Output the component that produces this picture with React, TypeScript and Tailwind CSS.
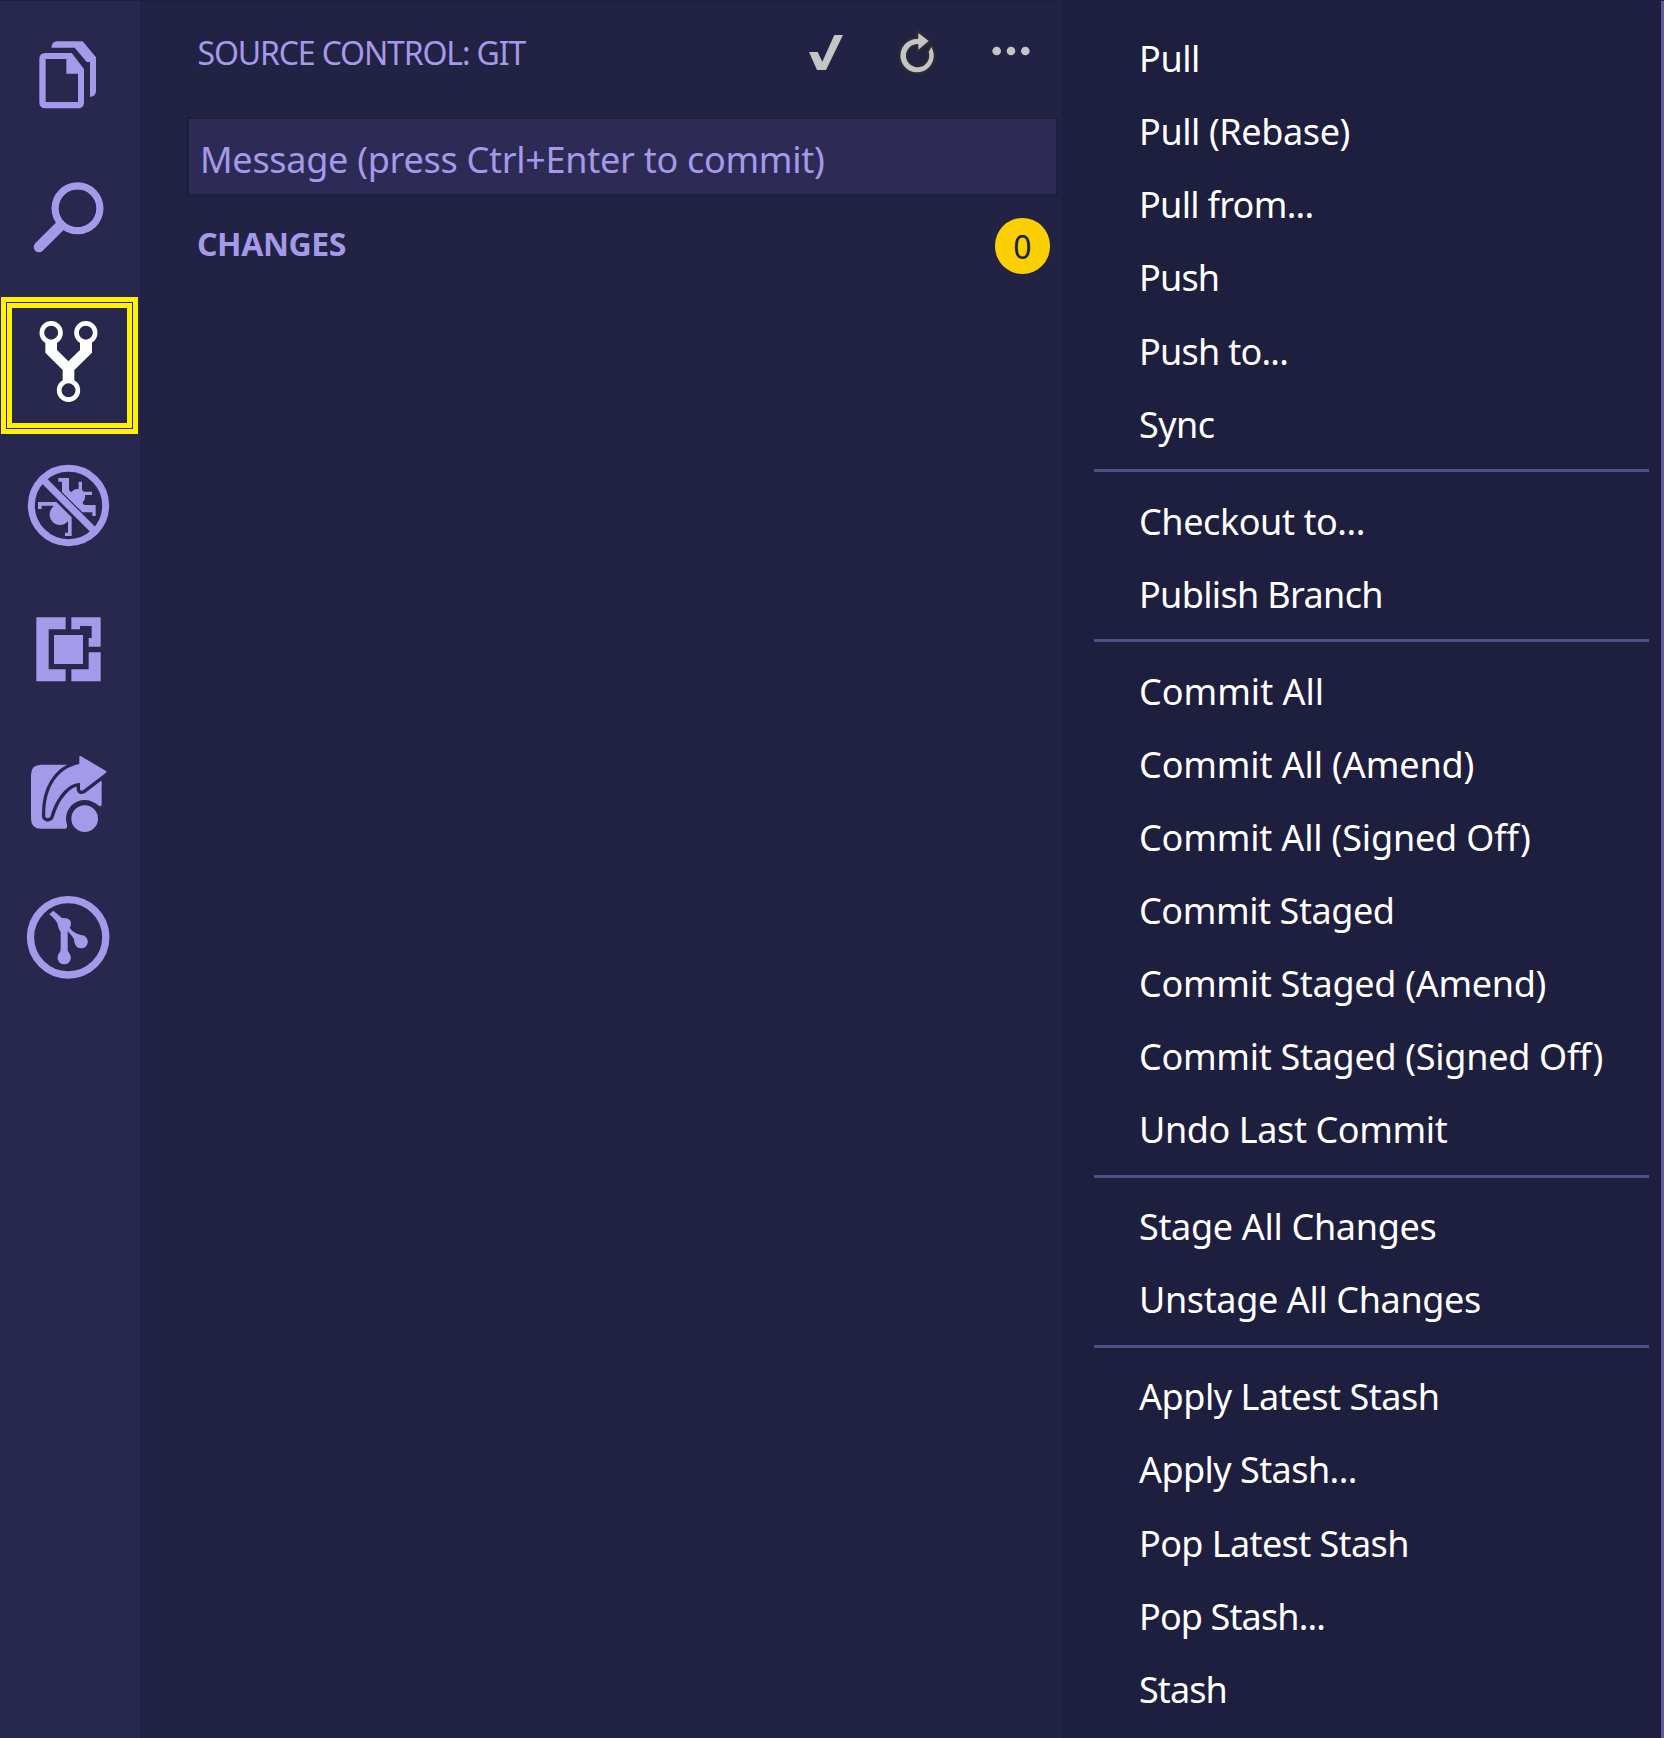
import type { ReactNode } from 'react';

const BAR = '#28284e';
const ICON = '#a599e9';

const menuGroups: [label: string, tracking: string][][] = [
  [
    ['Pull', 'tracking-[-0.4px]'],
    ['Pull (Rebase)', 'tracking-[-0.4px]'],
    ['Pull from...', 'tracking-[-0.7px]'],
    ['Push', 'tracking-[-0.8px]'],
    ['Push to...', 'tracking-[-0.75px]'],
    ['Sync', 'tracking-[-0.51px]'],
  ],
  [
    ['Checkout to...', 'tracking-[-0.42px]'],
    ['Publish Branch', 'tracking-[-0.66px]'],
  ],
  [
    ['Commit All', 'tracking-[0px]'],
    ['Commit All (Amend)', 'tracking-[-0.12px]'],
    ['Commit All (Signed Off)', 'tracking-[-0.17px]'],
    ['Commit Staged', 'tracking-[-0.42px]'],
    ['Commit Staged (Amend)', 'tracking-[-0.3px]'],
    ['Commit Staged (Signed Off)', 'tracking-[-0.29px]'],
    ['Undo Last Commit', 'tracking-[-0.4px]'],
  ],
  [
    ['Stage All Changes', 'tracking-[-0.32px]'],
    ['Unstage All Changes', 'tracking-[-0.37px]'],
  ],
  [
    ['Apply Latest Stash', 'tracking-[-0.45px]'],
    ['Apply Stash...', 'tracking-[-0.56px]'],
    ['Pop Latest Stash', 'tracking-[-0.6px]'],
    ['Pop Stash...', 'tracking-[-0.87px]'],
    ['Stash', 'tracking-[-0.9px]'],
  ],
];

function NavItem({ label, top, active = false, children }: { label: string; top: number; active?: boolean; children: ReactNode }) {
  return (
    <button aria-label={label} className="relative block h-[144px] w-full">
      {active && (
        <span className="absolute left-[1px] top-[8px] h-[137px] w-[137px] border-[5px] border-[#fff200] p-[1px]">
          <span className="block h-full w-full border-[5px] border-[#fff200]" />
        </span>
      )}
      <svg viewBox={`0 ${top} 420 432`} className="h-[144px] w-[140px]" fill={active ? '#fff' : ICON}>
        {children}
      </svg>
    </button>
  );
}

function ActivityBar() {
  return (
    <nav className="w-[140px] shrink-0 border-r-[3px] border-[#29284f] bg-[#28284e]">
      <NavItem label="Explorer" top={3}>
        <path d="M154 143q2-19 18-19H248L288 172V273q0 16-18 18V186H260L224 143Z" />
        <path fillRule="evenodd" d="M136 159H215L252 207V307q0 18-18 18H136q-18 0-18-18V177q0-18 18-18ZM137 177V306H234V221H199V177Z" />
      </NavItem>
      <NavItem label="Search" top={435}>
        <circle cx="232.500" cy="625" r="67" fill="none" stroke={ICON} strokeWidth="22" />
        <path d="M181 677L117 741" stroke={ICON} strokeWidth="32" strokeLinecap="round" />
        <circle cx="232.500" cy="625" r="56" fill={BAR} />
      </NavItem>
      <NavItem label="Source Control" top={27} active>
        <path d="M136 184H171V210L205 244L240 210V184H276V218L223 270V306H188V270L136 218Z" />
        <g fill={BAR} stroke="#fff" strokeWidth="14">
          <circle cx="153.500" cy="158" r="28" />
          <circle cx="257.500" cy="158" r="28" />
          <circle cx="205.500" cy="331" r="28" />
        </g>
      </NavItem>
      <NavItem label="Debug" top={459}>
        <circle cx="205.500" cy="676.500" r="111.500" fill="none" stroke={ICON} strokeWidth="21" />
        <path d="M128 583L299 754L284 769L113 598Z" />
        <path d="M175 594H207V630L214 637A24 24 0 0 1 236 627V605H246V630L252 635H276V645H255A24 24 0 0 1 247 668L253 675H287V708H277V697H247L186 636V605H175Z" />
        <path d="M114 666H169L215 712V768H195V758H204V724A31 31 0 1 1 156 684L161 677H125V687H114Z" />
      </NavItem>
      <NavItem label="Extensions" top={51}>
        <path d="M109 172H197V208H146V328H197V364H109ZM214 172H302V260H266V234H275V198H240V208H214ZM266 277H302V364H214V328H266ZM162 225H249V312H162Z" />
      </NavItem>
      <NavItem label="Live Share" top={483}>
        <path d="M208 614H123Q93 614 93 644V776Q93 806 123 806H195Q202 806 201 798L220 740L285 730L298 738Q305 741 305 733V664Z" />
        <path
          d="M238 592Q238 586 243 589L317 632Q322 635 317 639L250 690Q241 695 240 687V669C205 668 167 712 151 771Q143 778 136 771C133 690 168 626 238 612Z"
          stroke={BAR}
          strokeWidth="20"
          strokeLinejoin="round"
          paintOrder="stroke"
        />
        <circle cx="254" cy="776" r="56" fill={BAR} />
        <circle cx="254" cy="776" r="40" />
      </NavItem>
      <NavItem label="GitLens" top={75}>
        <circle cx="204.500" cy="292" r="113" fill="none" stroke={ICON} strokeWidth="22" />
        <path d="M148 223L160 212L186 234Q206 232 212 244Q215 256 209 263Q217 277 243 285L224 308Q226 297 203 274V330Q204 336 210 343H175Q182 336 182 328V277Q174 266 173 252Q168 240 148 223Z" />
        <circle cx="243.500" cy="305" r="20" />
        <circle cx="192.500" cy="353" r="20" />
      </NavItem>
    </nav>
  );
}

function SidePanel() {
  return (
    <section className="flex w-[922px] shrink-0 flex-col bg-[#222244] text-[#a599e9]">
      <header className="flex h-[116px] items-start">
        <h1 className="ml-[57.500px] mt-[22px] w-[611.500px] text-[32px] leading-[60px] tracking-[-1.150px]">SOURCE CONTROL: GIT</h1>
        <svg viewBox="87 86 102 140" className="mt-[27.667px] h-[46.667px] w-[34px]" fill="#c5c5c5">
          <path d="M87 155H113L127 184L163 104H189L138 209H111Z" />
        </svg>
        <svg viewBox="350 86 122 140" className="ml-[53.667px] mt-[27.667px] h-[46.667px] w-[40.667px]" fill="#c5c5c5">
          <path
            d="M414 98L445 122L414 148V131A35 35 0 1 0 445 155L453 140A50 50 0 1 1 411 116L414 115.500Z"
            stroke="#2d2d30"
            strokeWidth="13"
            paintOrder="stroke"
          />
        </svg>
        <svg viewBox="637 86 114 140" className="ml-[55px] mt-[27.667px] h-[46.667px] w-[38px]" fill="#c5c5c5">
          <circle cx="651" cy="152" r="13" />
          <circle cx="694" cy="152" r="13" />
          <circle cx="737" cy="152" r="13" />
        </svg>
      </header>
      <div className="ml-[46px] h-[80px] w-[873px] border-[3px] border-t-2 border-[#1e1e3f] bg-[#2d2b55] pl-[11px] text-[36px] leading-[81px] tracking-[-0.280px]">
        Message (press Ctrl+Enter to commit)
      </div>
      <div className="mt-[21px] flex h-[56px] items-center justify-between pl-[57px] pr-[12px]">
        <h2 className="-mt-[5px] text-[32px] font-bold leading-[56px] tracking-[-0.43px]">CHANGES</h2>
        <span className="h-[56px] w-[55px] rounded-full bg-[#fad000] text-center text-[32px] leading-[57px] text-[#222244]">0</span>
      </div>
    </section>
  );
}

function GitMenu() {
  return (
    <div className="min-w-0 flex-1 border-r-[3px] border-[#645a97] bg-[#1e1e3f] pt-[21.100px] text-[36px] leading-[73.140px] text-white">
      {menuGroups.map((group, i) => (
        <div key={i}>
          {i > 0 && <div className="mb-[12.600px] ml-[32px] mr-[12px] mt-[8.200px] h-[3px] bg-[#534f85]" />}
          {group.map(([label, tracking]) => (
            <div key={label} className="h-[73.140px] whitespace-nowrap pl-[77px]">
              <span className={tracking}>{label}</span>
            </div>
          ))}
        </div>
      ))}
    </div>
  );
}

export default function App() {
  return (
    <main className="flex h-[1738px] w-[1664px] overflow-hidden border-t border-[#1e1e3f] bg-[#1e1e3f] font-['Noto_Sans',sans-serif]">
      <ActivityBar />
      <SidePanel />
      <GitMenu />
    </main>
  );
}
